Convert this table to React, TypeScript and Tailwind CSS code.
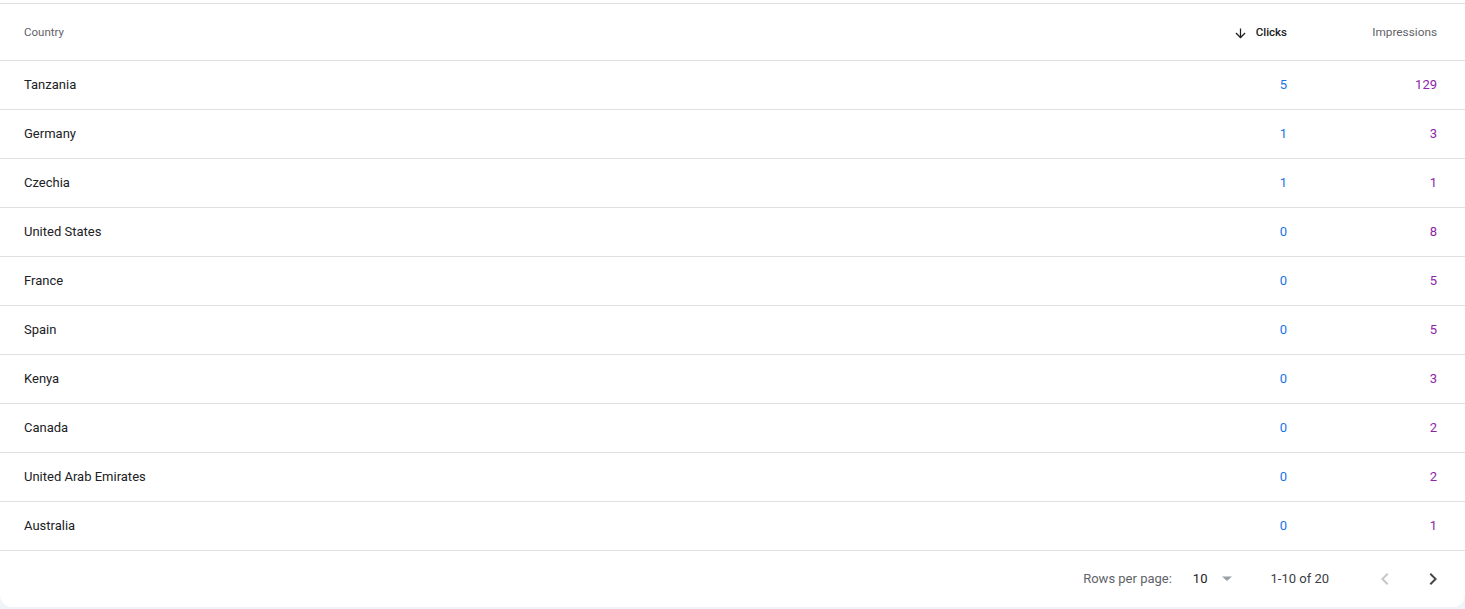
import React from 'react';

type Row = { country: string; clicks: number; impressions: number };

const rows: Row[] = [
  { country: 'Tanzania', clicks: 5, impressions: 129 },
  { country: 'Germany', clicks: 1, impressions: 3 },
  { country: 'Czechia', clicks: 1, impressions: 1 },
  { country: 'United States', clicks: 0, impressions: 8 },
  { country: 'France', clicks: 0, impressions: 5 },
  { country: 'Spain', clicks: 0, impressions: 5 },
  { country: 'Kenya', clicks: 0, impressions: 3 },
  { country: 'Canada', clicks: 0, impressions: 2 },
  { country: 'United Arab Emirates', clicks: 0, impressions: 2 },
  { country: 'Australia', clicks: 0, impressions: 1 },
];

const App: React.FC = () => {
  return (
    <div className="w-[1465px] h-[609px] bg-[#f0f4f9] overflow-hidden" style={{ fontFamily: 'Roboto, "Liberation Sans", sans-serif' }}>
      <div className="bg-white rounded-b-[12px] pt-[3px]">
        <table className="w-full border-collapse">
          <thead>
            <tr className="h-[57px] border-t border-b border-[#e0e0e0]">
              <th className="pl-6 pt-[2px] text-left text-[11.5px] font-normal text-[#5f6368]">Country</th>
              <th className="w-[200px] pt-[2px] text-right text-[11.5px] font-medium text-[#202124]">
                <div className="flex items-center justify-end gap-[8px]">
                  <svg width="15" height="15" viewBox="0 0 24 24" fill="#202124">
                    <path d="M20 12l-1.41-1.41L13 16.17V4h-2v12.17l-5.58-5.59L4 12l8 8 8-8z" />
                  </svg>
                  <span>Clicks</span>
                </div>
              </th>
              <th className="w-[178px] pt-[2px] pr-[28px] text-right text-[11.8px] font-normal text-[#5f6368]">Impressions</th>
            </tr>
          </thead>
          <tbody>
            {rows.map(r => (
              <tr key={r.country} className="h-[49px] border-b border-[#e0e0e0]">
                <td className="pl-6 text-[13px] text-[#202124]">{r.country}</td>
                <td className="text-right text-[13px] text-[#1a73e8]">{r.clicks}</td>
                <td className="pr-[28px] text-right text-[13px] text-[#8e24aa]">{r.impressions}</td>
              </tr>
            ))}
          </tbody>
        </table>
        <div className="h-[56px] flex items-center justify-end text-[13px] text-[#5f6368]">
          <span>Rows per page:</span>
          <span className="ml-[21px] text-[#202124]">10</span>
          <svg className="ml-[14px]" width="12" height="12" viewBox="0 0 12 12" fill="#9aa0a6">
            <path d="M1 3.5h10L6 8z" />
          </svg>
          <span className="ml-[37px] text-[#3c4043]">1-10 of 20</span>
          <svg className="ml-[44px]" width="24" height="24" viewBox="0 0 24 24" fill="#c4c7c5">
            <path d="M15.41 7.41L14 6l-6 6 6 6 1.41-1.41L10.83 12z" />
          </svg>
          <svg className="ml-[24px] mr-[20px]" width="24" height="24" viewBox="0 0 24 24" fill="#444746">
            <path d="M10 6L8.59 7.41 13.17 12l-4.58 4.59L10 18l6-6z" />
          </svg>
        </div>
      </div>
    </div>
  );
};

export default App;
